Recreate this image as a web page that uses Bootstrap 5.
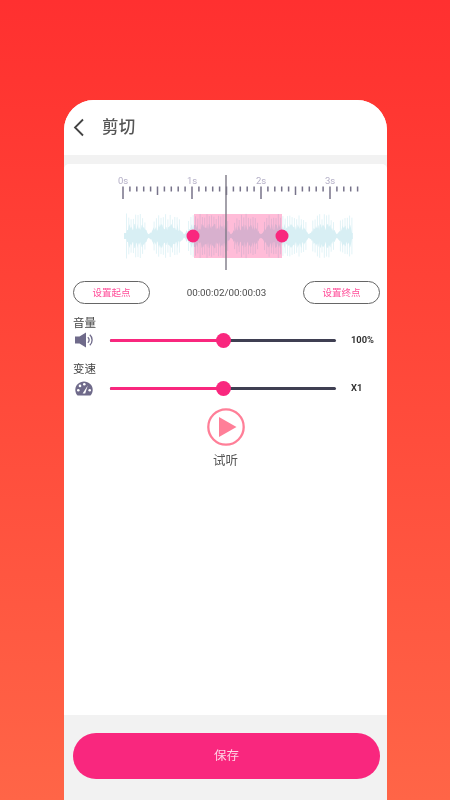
<!doctype html>
<html lang="zh">
<head>
<meta charset="utf-8">
<title>剪切</title>
<link href="https://cdn.jsdelivr.net/npm/bootstrap@5.3.0/dist/css/bootstrap.min.css" rel="stylesheet">
<style>
html,body{height:100%}
body{background:linear-gradient(180deg,#ff3030 0%,#ff3531 10%,#ff6547 100%);overflow:hidden;font-family:Roboto,"Noto Sans CJK SC",sans-serif;color:#444}
.phone{width:323px;height:700px;margin:100px 0 0 64px;background:#f2f2f2;border-radius:30px 30px 0 0;overflow:hidden}
.head-bar{height:55px;background:#fff;padding-left:9px}
.head-title{font-size:16.5px;font-weight:500;color:#555;margin-left:18px;padding-top:2px;letter-spacing:.2px;line-height:1}
.main-panel{margin-top:9px;height:551px;background:#fff;border-radius:5px 5px 0 0}
.wave-svg{width:323px;height:111px}
.tool-row{padding:6px 7px 0 9px;height:29px}
.pill-btn{width:77px;height:23px;padding:0;font-size:9.5px;line-height:21px;color:#ff4f9a;border:1px solid #666;background:#fff}
.time-text{font-size:9.8px;color:#4d4d4d;line-height:1}
.ctl-label{font-size:11.5px;line-height:14px;color:#444;padding-left:9px}
.ctl-icon{width:46px;padding-left:11px}
.track{width:226px;height:3px;background:#3f3f52;border-radius:2px}
.track-fill{height:3px;width:113px;background:#f9277e;border-radius:2px}
.track-thumb{width:15px;height:15px;background:#f9277e;border-radius:50%;left:106px;top:-6px}
.ctl-value{font-size:9.3px;font-weight:700;color:#333;margin-left:15px}
.block-vol{margin-top:12px}
.block-spd{margin-top:12px}
.ctl-line{height:20px}
.block-spd .ctl-line{margin-top:2px}
.play-wrap{margin-top:10px}
.play-ring{width:38px;height:38px}
.play-text{font-size:12.5px;line-height:16px;color:#555;margin-top:7px}
.foot-bar{padding:18px 7px 0 9px}
.save-btn{height:46px;font-size:12.5px;color:#ffd4e6;background:#f9277e;border:0;width:307px}
</style>
</head>
<body>
<div class="phone d-flex flex-column">
  <div class="head-bar d-flex align-items-center">
    <svg width="11" height="19" viewBox="0 0 11 19" fill="none"><path d="M10 1.5 2 9.5l8 8" stroke="#444" stroke-width="1.8"/></svg>
    <span class="head-title">剪切</span>
  </div>
  <div class="main-panel">
    <svg class="wave-svg d-block" viewBox="0 0 323 111" id="wave">
      <g id="ticks"></g>
      <g font-family="Roboto,sans-serif" font-size="9.5" fill="#b3aec6" text-anchor="middle">
        <text x="59" y="20">0s</text><text x="128" y="20">1s</text><text x="197" y="20">2s</text><text x="266" y="20">3s</text>
      </g>
      <g id="wv" fill="#d8eff4" stroke="#e2f3f7" stroke-width="1"></g>
      <rect x="130" y="50" width="88" height="44" fill="#ffbcd8" style="mix-blend-mode:multiply"/>
      <line x1="162" y1="11" x2="162" y2="106" stroke="#7d7986" stroke-width="1.4"/>
      <circle cx="129" cy="72" r="6.5" fill="#f9277e"/>
      <circle cx="218" cy="72" r="6.5" fill="#f9277e"/>
    </svg>
    <div class="tool-row d-flex justify-content-between align-items-center">
      <button type="button" class="btn pill-btn rounded-pill">设置起点</button>
      <span class="time-text">00:00:02/00:00:03</span>
      <button type="button" class="btn pill-btn rounded-pill">设置终点</button>
    </div>
    <div class="block-vol">
      <div class="ctl-label">音量</div>
      <div class="ctl-line d-flex align-items-center">
        <div class="ctl-icon">
          <svg class="d-block" width="19" height="16" viewBox="0 0 19 16"><path d="M0 4.5h4.5L11 .5v15l-6.5-4H0z" fill="#6f6a8a"/><path d="M12.8 5.2a3.6 3.6 0 0 1 0 5.6M14.8 2.8a7 7 0 0 1 0 10.4" fill="none" stroke="#6f6a8a" stroke-width="1.3"/></svg>
        </div>
        <div class="track position-relative"><div class="track-fill"></div><div class="track-thumb position-absolute"></div></div>
        <span class="ctl-value">100%</span>
      </div>
    </div>
    <div class="block-spd">
      <div class="ctl-label">变速</div>
      <div class="ctl-line d-flex align-items-center">
        <div class="ctl-icon">
          <svg class="d-block" width="18" height="15" viewBox="0 0 18 15"><path d="M9 .4C4.200.4.300 4 .300 8.700c0 2 .6 3.700 1.600 5 .4.500.9.900 1.600.9h11c.7 0 1.200-.4 1.600-.9 1-1.300 1.600-3 1.600-5C17.700 4 13.800.4 9 .4z" fill="#6f6a8a"/><g fill="#fff"><circle cx="3.300" cy="9.300" r="1.300"/><circle cx="5" cy="4.900" r="1.300"/><circle cx="9.300" cy="3.200" r="1.300"/><circle cx="14.700" cy="9.300" r="1.300"/><path d="M12.800 4.600 10.200 12.600H7.600z"/></g></svg>
        </div>
        <div class="track position-relative"><div class="track-fill"></div><div class="track-thumb position-absolute"></div></div>
        <span class="ctl-value">X1</span>
      </div>
    </div>
    <div class="play-wrap d-flex flex-column align-items-center">
      <svg class="play-ring d-block" viewBox="0 0 38 38"><circle cx="19" cy="19" r="17.700" fill="#fff" stroke="#ff7f98" stroke-width="2.300"/><path d="M12 9v20l17.500-10z" fill="#ff7f98"/></svg>
      <div class="play-text">试听</div>
    </div>
  </div>
  <div class="foot-bar">
    <button type="button" class="btn save-btn rounded-pill d-block">保存</button>
  </div>
</div>
<script>
(function(){
  var ns='http://www.w3.org/2000/svg',t=document.getElementById('ticks'),w=document.getElementById('wv');
  function add(p,n,a){var e=document.createElementNS(ns,n);for(var k in a)e.setAttribute(k,a[k]);p.appendChild(e);}
  for(var i=0;i<=34;i++){
    var x=59+i*6.9,maj=i%10===0,mid=i%5===0;
    add(t,'line',{x1:x,x2:x,y1:22.5,y2:maj?35:(mid?31:27.5),stroke:maj?'#6d6880':'#77738a','stroke-width':maj?1.4:1.5});
  }
  function n(v){var s=Math.sin(v*12.9898)*43758.5453;return s-Math.floor(s);}
  var gaps=[85,120,167,197,245,273];
  var top=[],bot=[];
  for(var x=60;x<=289;x+=.8){
    var d=99;gaps.forEach(function(g){d=Math.min(d,Math.abs(x-g));});
    var env=Math.min(1,d/6);
    var h=1.5+11*env*(.35+.65*n(x));
    if(x<62.5||x>287.5)h=Math.min(h,3);
    top.push(x.toFixed(1)+','+(72-h).toFixed(1));bot.unshift(x.toFixed(1)+','+(72+h).toFixed(1));
  }
  for(var sx=62.5;sx<=289;sx+=2.3){
    var d2=99;gaps.forEach(function(g){d2=Math.min(d2,Math.abs(sx-g));});
    if(d2<3)continue;
    var amp=Math.min(1,d2/9)*(.45+.55*n(sx+3));
    var s=11+12*amp;
    add(w,'line',{x1:sx,x2:sx,y1:72-s,y2:72+s});
  }
  add(w,'polygon',{points:top.concat(bot).join(' '),stroke:'none'});
})();
</script>
<script src="https://cdn.jsdelivr.net/npm/bootstrap@5.3.0/dist/js/bootstrap.bundle.min.js"></script>
</body>
</html>
